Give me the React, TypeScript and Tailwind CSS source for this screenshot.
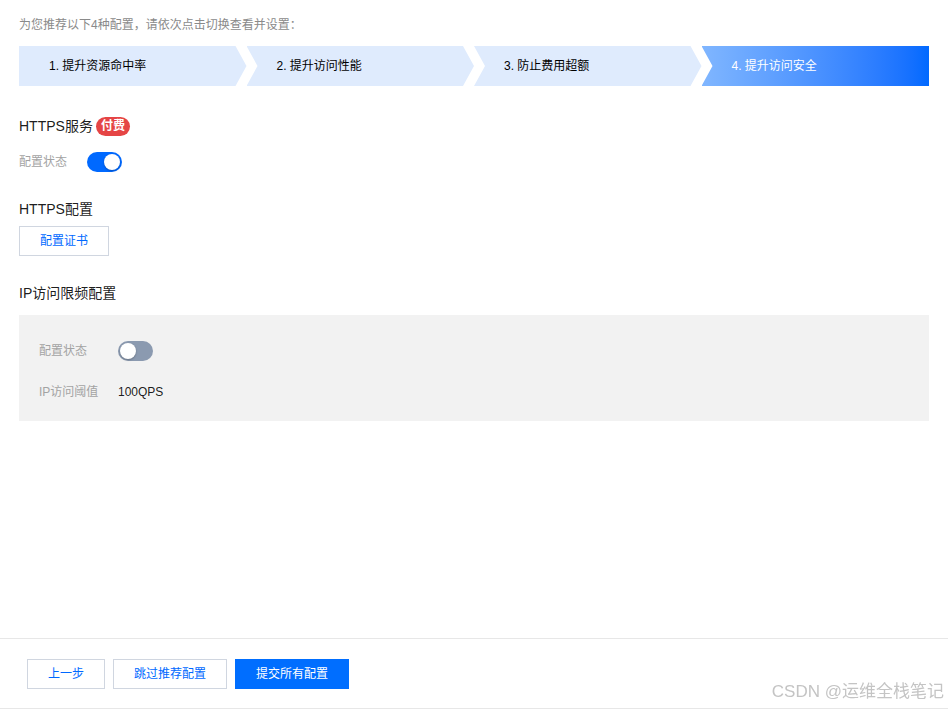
import React from "react";

const steps = [
  "1. 提升资源命中率",
  "2. 提升访问性能",
  "3. 防止费用超额",
  "4. 提升访问安全",
];

function stepClip(i: number) {
  if (i === 0)
    return "[clip-path:polygon(0_0,calc(100%-11px)_0,100%_50%,calc(100%-11px)_100%,0_100%)]";
  if (i === steps.length - 1)
    return "[clip-path:polygon(0_0,100%_0,100%_100%,0_100%,11px_50%)]";
  return "[clip-path:polygon(0_0,calc(100%-11px)_0,100%_50%,calc(100%-11px)_100%,0_100%,11px_50%)]";
}

function Toggle({ on }: { on: boolean }) {
  return (
    <div
      className={
        on
          ? "w-[35px] h-[20px] rounded-full bg-[#0069ff] flex items-center justify-end px-[2px]"
          : "w-[35px] h-[20px] rounded-full bg-[#8b9ab0] flex items-center justify-start px-[2px]"
      }
    >
      <div className="w-[16px] h-[16px] rounded-full bg-white shadow-[0_1px_2px_rgba(0,0,0,0.25)]" />
    </div>
  );
}

export default function App() {
  return (
    <div
      className="relative w-full h-[709px] bg-white flex flex-col overflow-hidden"
      style={{ fontFamily: '"Liberation Sans", "Noto Sans CJK SC", sans-serif' }}
    >
      <div className="flex-1 px-[19px] pt-[15px]">
        <div className="text-[12px] leading-[20px] text-[#8a8a8a]">
          为您推荐以下4种配置，请依次点击切换查看并设置：
        </div>

        <div className="mt-[11px] flex h-[40px]">
          {steps.map((s, i) => {
            const last = i === steps.length - 1;
            return (
              <div
                key={s}
                className={
                  (last
                    ? "bg-gradient-to-r from-[#80b6ff] to-[#0069ff] text-white "
                    : "bg-[#dfebfd] text-[#000000] ") +
                  "flex-1 flex items-center pl-[30px] text-[12px] " +
                  stepClip(i)
                }
              >
                {s}
              </div>
            );
          })}
        </div>

        <div className="mt-[30px] flex items-center h-[20px]">
          <span className="text-[14px] leading-[20px] text-[#000000e6]">HTTPS服务</span>
          <span className="ml-[3px] h-[19px] w-[34px] rounded-full bg-[#e54545] text-white text-[12px] font-bold flex items-center justify-center">
            付费
          </span>
        </div>

        <div className="mt-[16px] flex items-center h-[20px]">
          <span className="w-[68px] text-[12px] leading-[20px] text-[#a3a3a3]">配置状态</span>
          <Toggle on />
        </div>

        <div className="mt-[27px] text-[14px] leading-[20px] text-[#000000e6]">HTTPS配置</div>
        <button className="mt-[7px] w-[90px] h-[30px] border border-[#d0d6e0] bg-white text-[12px] text-[#0069ff] flex items-center justify-center">
          配置证书
        </button>

        <div className="mt-[27px] text-[14px] leading-[20px] text-[#000000e6]">IP访问限频配置</div>

        <div className="mt-[12px] w-[910px] bg-[#f2f2f2] px-[20px] pt-[26px] pb-[19px]">
          <div className="flex items-center h-[20px]">
            <span className="w-[79px] text-[12px] leading-[20px] text-[#a3a3a3]">配置状态</span>
            <Toggle on={false} />
          </div>
          <div className="mt-[21px] flex items-center h-[20px]">
            <span className="w-[79px] text-[12px] leading-[20px] text-[#a3a3a3]">IP访问阈值</span>
            <span className="text-[12px] leading-[20px] text-[#000000e6]">100QPS</span>
          </div>
        </div>
      </div>

      <div className="border-t border-b border-[#e7e7e7] pl-[27px] pt-[20px] pb-[19px] flex gap-[8px]">
        <button className="w-[78px] h-[30px] border border-[#d0d6e0] bg-white text-[12px] text-[#0069ff] flex items-center justify-center">
          上一步
        </button>
        <button className="w-[114px] h-[30px] border border-[#d0d6e0] bg-white text-[12px] text-[#0069ff] flex items-center justify-center">
          跳过推荐配置
        </button>
        <button className="w-[114px] h-[30px] bg-[#006eff] text-[12px] text-white flex items-center justify-center">
          提交所有配置
        </button>
      </div>

      <div className="absolute right-[4px] bottom-[5px] text-[17px] leading-[24px] text-[#c4c4c4] blur-[0.4px]">
        CSDN @运维全栈笔记
      </div>
    </div>
  );
}
